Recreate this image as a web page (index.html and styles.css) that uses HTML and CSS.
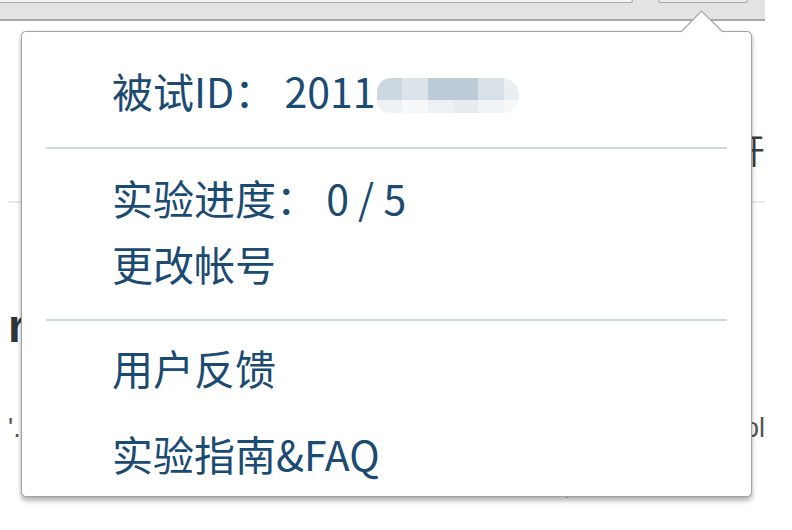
FILE: index.html
```html
<!DOCTYPE html>
<html lang="zh-CN">
<head>
<meta charset="utf-8">
<title>Popup</title>
<link rel="stylesheet" href="styles.css">
</head>
<body>
<div class="toolbar">
  <div class="tb-input"></div>
  <div class="tb-button"></div>
</div>
<div class="page">
  <div class="title-row">开</div>
  <div class="rule"></div>
  <div class="heading">r</div>
  <div class="text-row"><span>'.</span><span>ol</span></div>
  <div class="bottom-row">- 2 · , 2023 1 8</div>
</div>

<div class="popup">
  <svg class="arrow" width="44" height="23" viewBox="0 0 44 23">
    <polygon points="1,22.5 21.5,1 43,22.5" fill="#ffffff"/>
    <polyline points="1,22 21.5,1 43,22" fill="none" stroke="#a8a8a8" stroke-width="1.2"/>
  </svg>
  <div class="item item-id">被试ID： 2011<span class="mosaic"><span class="m c1"></span><span class="m c2"></span><span class="m c3"></span><span class="m c3"></span><span class="m c4"></span><span class="m c5"></span><span class="m d1"></span><span class="m d2"></span><span class="m d3"></span><span class="m d4"></span><span class="m d5"></span><span class="m d6"></span></span></div>
  <div class="sep sep-1"></div>
  <div class="item item-progress">实验进度： 0 / 5</div>
  <div class="item item-change">更改帐号</div>
  <div class="sep sep-2"></div>
  <div class="item item-feedback">用户反馈</div>
  <div class="item item-guide">实验指南&amp;FAQ</div>
</div>
</body>
</html>
```
FILE: styles.css
```css
html, body {
  margin: 0;
  padding: 0;
}
body {
  width: 792px;
  height: 530px;
  overflow: hidden;
  background: #ffffff;
  position: relative;
  font-family: "Liberation Sans", "Noto Sans CJK SC", sans-serif;
}
.toolbar {
  width: 765px;
  height: 19px;
  background: #e3e3e3;
  border-bottom: 2px solid #a9a9a9;
  display: flex;
  gap: 25px;
  align-items: flex-start;
}
.tb-input {
  width: 632px;
  height: 2px;
  background: #f4f4f4;
  border-bottom: 1px solid #a6a6a6;
  border-right: 1px solid #a6a6a6;
  border-radius: 0 0 5px 0;
}
.tb-button {
  width: 88px;
  height: 2px;
  background: #ececec;
  border: 1px solid #a6a6a6;
  border-top: none;
  border-radius: 0 0 5px 5px;
}
.page {
  padding: 0 27px 0 8px;
  color: #333a40;
}
.title-row {
  margin-top: 108px;
  text-align: right;
  font-family: "Noto Sans CJK SC", sans-serif;
  font-size: 35px;
  line-height: 40px;
  color: #3a3f44;
}
.rule {
  margin-top: 32px;
  height: 2px;
  background: #e8e8e8;
}
.heading {
  margin-top: 98px;
  font-size: 46px;
  line-height: 50px;
  font-weight: bold;
  color: #2d343a;
}
.text-row {
  margin-top: 62px;
  display: flex;
  justify-content: space-between;
  font-size: 27px;
  line-height: 30px;
  color: #555;
}
.bottom-row {
  margin-top: 27px;
  padding-left: 494px;
  font-size: 27px;
  line-height: 30px;
  color: #444;
  letter-spacing: 1px;
  white-space: nowrap;
}
.popup {
  position: absolute;
  left: 21px;
  top: 31px;
  width: 731px;
  height: 466px;
  box-sizing: border-box;
  background: #ffffff;
  border: 1px solid #a3a3a3;
  border-radius: 5px;
  box-shadow: 0 4px 5px rgba(0, 0, 0, 0.28), 0 0 2px rgba(0, 0, 0, 0.15);
  padding-top: 39px;
  display: flex;
  flex-direction: column;
}
.arrow {
  position: absolute;
  left: 658px;
  top: -22px;
}
.item {
  flex: none;
  padding-left: 90px;
  font-family: "Noto Sans CJK SC", sans-serif;
  font-size: 41px;
  line-height: 38px;
  height: 48px;
  color: #1b4b72;
  white-space: nowrap;
}
.sep {
  flex: none;
  margin-left: 24px;
  margin-right: 24px;
  height: 2px;
  background: #cbd8e3;
}
.sep-1 { margin-top: 28px; }
.item-progress { margin-top: 29px; }
.item-change { margin-top: 18px; }
.sep-2 { margin-top: 27px; }
.item-feedback { margin-top: 27px; }
.item-guide { margin-top: 38px; }
.mosaic {
  display: inline-grid;
  grid-template-columns: 25px 26px 25px 25px 26px 15px;
  grid-template-rows: 22px 13px;
  vertical-align: 8px;
  margin-left: 2px;
  border-radius: 0 17px 17px 0;
  overflow: hidden;
}
.mosaic .m { display: block; }
.c1 { background: #ccd8e0; border-radius: 14px 0 0 0; }
.c2 { background: #dce4ea; }
.c3 { background: #bccbd6; }
.c4 { background: #d8e1e8; }
.c5 { background: #e8eef2; }
.d1 { background: #eef2f5; border-radius: 0 0 0 14px; }
.d2 { background: #f6f8fa; }
.d3 { background: #edf1f4; }
.d4 { background: #e6ecf0; }
.d5 { background: #f1f4f6; }
.d6 { background: #f5f7f9; }
```
